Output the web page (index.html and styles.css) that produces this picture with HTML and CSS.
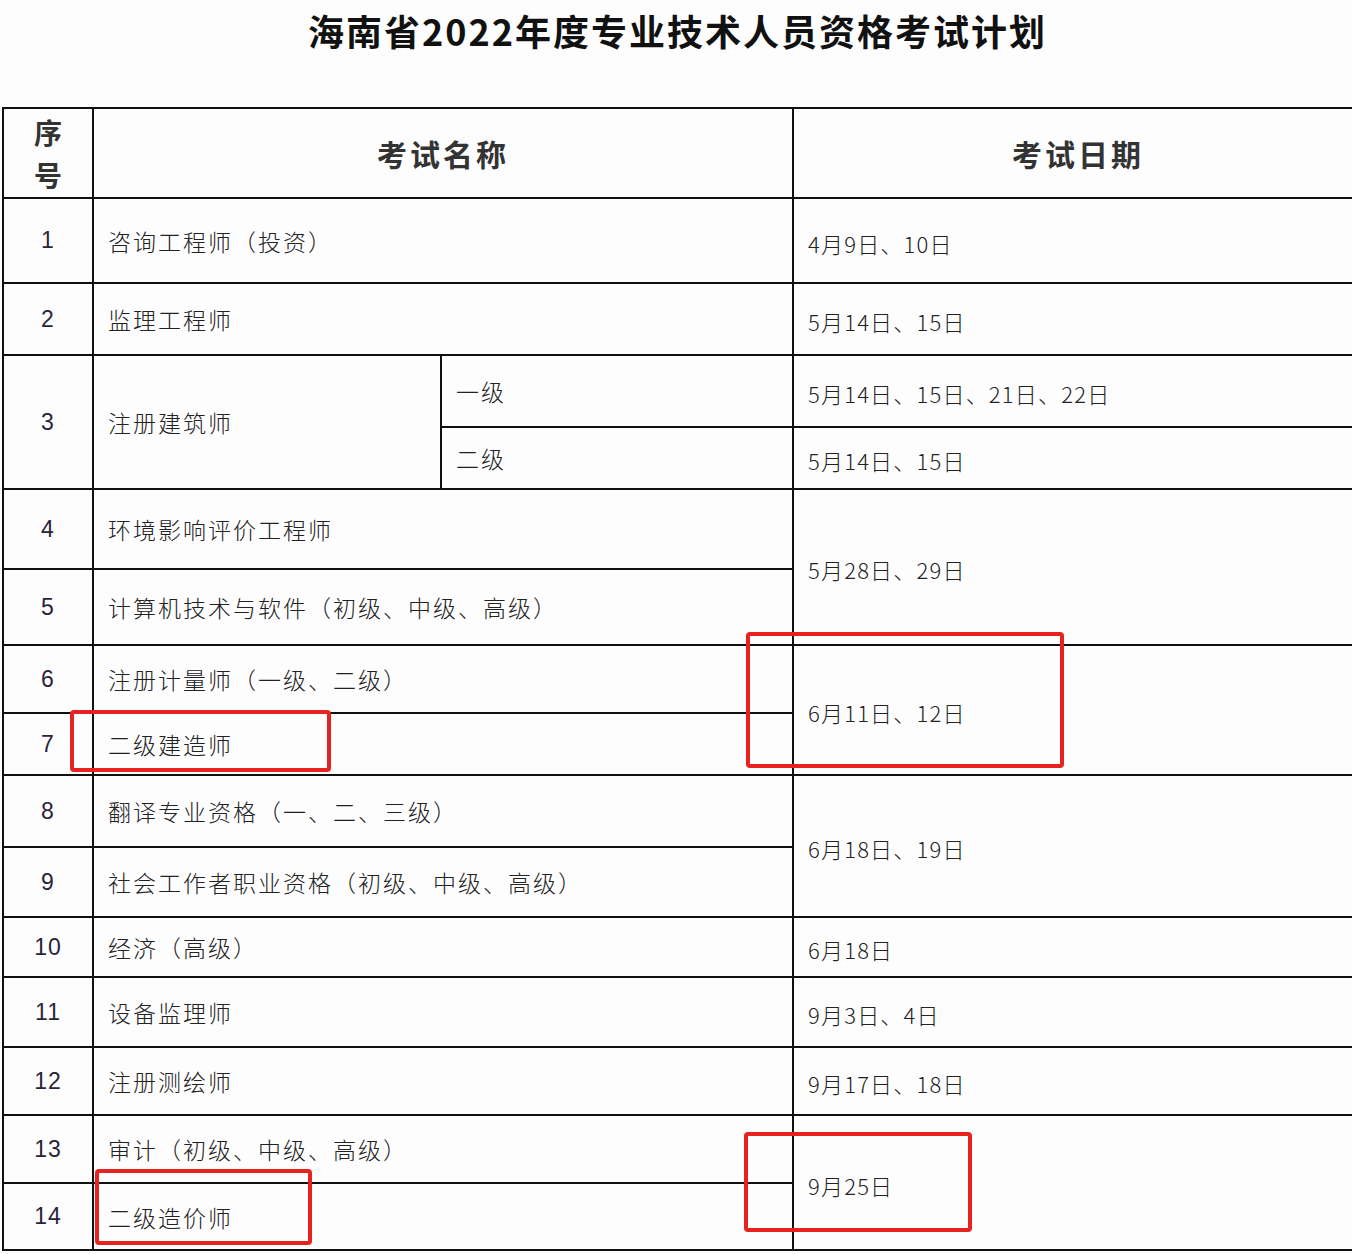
FILE: index.html
```html
<!DOCTYPE html>
<html lang="zh-CN">
<head>
<meta charset="utf-8">
<title>海南省2022年度专业技术人员资格考试计划</title>
<link rel="stylesheet" href="styles.css">
</head>
<body>
<div class="page">
  <h1 class="title">海南省2022年度专业技术人员资格考试计划</h1>
  <table class="plan">
    <colgroup>
      <col class="c-no"><col class="c-name"><col class="c-sub"><col class="c-date">
    </colgroup>
    <thead>
      <tr class="r-head">
        <th class="no">序<br>号</th>
        <th colspan="2">考试名称</th>
        <th>考试日期</th>
      </tr>
    </thead>
    <tbody>
      <tr class="h85"><td class="no">1</td><td colspan="2" class="name">咨询工程师（投资）</td><td class="date">4月9日、10日</td></tr>
      <tr class="h72"><td class="no">2</td><td colspan="2" class="name">监理工程师</td><td class="date">5月14日、15日</td></tr>
      <tr class="h72"><td class="no" rowspan="2">3</td><td class="name" rowspan="2">注册建筑师</td><td class="name">一级</td><td class="date">5月14日、15日、21日、22日</td></tr>
      <tr class="h62"><td class="name">二级</td><td class="date">5月14日、15日</td></tr>
      <tr class="h80"><td class="no">4</td><td colspan="2" class="name">环境影响评价工程师</td><td class="date" rowspan="2">5月28日、29日</td></tr>
      <tr class="h76"><td class="no">5</td><td colspan="2" class="name">计算机技术与软件（初级、中级、高级）</td></tr>
      <tr class="h68"><td class="no">6</td><td colspan="2" class="name">注册计量师（一级、二级）</td><td class="date" rowspan="2">6月11日、12日</td></tr>
      <tr class="h62"><td class="no">7</td><td colspan="2" class="name">二级建造师</td></tr>
      <tr class="h72"><td class="no">8</td><td colspan="2" class="name">翻译专业资格（一、二、三级）</td><td class="date" rowspan="2">6月18日、19日</td></tr>
      <tr class="h70"><td class="no">9</td><td colspan="2" class="name">社会工作者职业资格（初级、中级、高级）</td></tr>
      <tr class="h60"><td class="no">10</td><td colspan="2" class="name">经济（高级）</td><td class="date">6月18日</td></tr>
      <tr class="h70"><td class="no">11</td><td colspan="2" class="name">设备监理师</td><td class="date">9月3日、4日</td></tr>
      <tr class="h68"><td class="no">12</td><td colspan="2" class="name">注册测绘师</td><td class="date">9月17日、18日</td></tr>
      <tr class="h68"><td class="no">13</td><td colspan="2" class="name">审计（初级、中级、高级）</td><td class="date" rowspan="2">9月25日</td></tr>
      <tr class="h67"><td class="no">14</td><td colspan="2" class="name">二级造价师</td></tr>
    </tbody>
  </table>
  <div class="mark m1"></div>
  <div class="mark m2"></div>
  <div class="mark m3"></div>
  <div class="mark m4"></div>
</div>
</body>
</html>
```
FILE: styles.css
```css
html, body {
  margin: 0;
  padding: 0;
  background: #fdfdfe;
  overflow: hidden;
}
body {
  font-family: "Noto Sans CJK SC", "Noto Sans", sans-serif;
  color: #1a1a1a;
}
.page {
  position: relative;
  width: 1352px;
  height: 1254px;
  overflow: hidden;
}
.title {
  margin: 0;
  height: 107px;
  line-height: 60px;
  font-size: 36px;
  font-weight: 700;
  letter-spacing: 2px;
  text-align: center;
  color: #111;
  box-sizing: border-box;
  padding-left: 3px;
}
.plan {
  margin-left: 2px;
  width: 1360px;
  border-collapse: collapse;
  table-layout: fixed;
}
.c-no { width: 90px; }
.c-name { width: 348px; }
.c-sub { width: 352px; }
.c-date { width: 570px; }
.plan th, .plan td {
  border: 2px solid #111;
  padding: 0 0 0 14px;
  vertical-align: middle;
  text-align: left;
}
.plan th {
  font-size: 30px;
  font-weight: 700;
  color: #333;
  letter-spacing: 3px;
  text-align: center;
  padding: 0;
}
.plan th.no {
  font-size: 28px;
  line-height: 43px;
  letter-spacing: 0;
  padding-top: 2px;
}
.plan td {
  font-size: 23px;
  font-weight: 300;
  letter-spacing: 2px;
  color: #222;
}
.plan td.no {
  text-align: center;
  padding: 0;
  font-family: "Liberation Sans", "Noto Sans", sans-serif;
  font-size: 23px;
  letter-spacing: 1px;
  color: #2a2438;
}
.plan td.date {
  font-size: 22px;
  letter-spacing: 1.2px;
  padding-top: 4px;
}
.r-head { height: 90px; }
.h85 { height: 85px; }
.h80 { height: 80px; }
.h76 { height: 76px; }
.h72 { height: 72px; }
.h70 { height: 70px; }
.h68 { height: 68px; }
.h67 { height: 67px; }
.h62 { height: 62px; }
.h60 { height: 60px; }
.mark {
  position: absolute;
  border: 4px solid #e8231f;
  border-radius: 4px;
  box-sizing: border-box;
}
.m1 { left: 70px; top: 710px; width: 261px; height: 62px; }
.m2 { left: 746px; top: 632px; width: 318px; height: 136px; }
.m3 { left: 95px; top: 1169px; width: 217px; height: 76px; }
.m4 { left: 744px; top: 1132px; width: 228px; height: 100px; }
```
